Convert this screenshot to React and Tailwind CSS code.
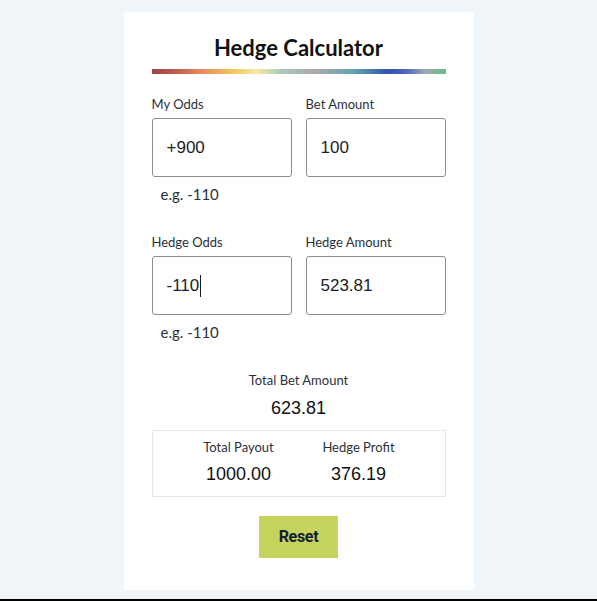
import React from 'react';

const Field = ({ label, value, hint, caret }) => (
  <div className="flex flex-col">
    <label className="text-[13px] leading-[18px] text-[#2b2f3a] font-['Lato',sans-serif]">{label}</label>
    <div className="mt-[5px] h-[59px] border border-[#8c8c8c] rounded-[3px] flex items-center pl-[14px] bg-white">
      <span className="text-[17px] text-[#1c1c24] font-['Liberation_Sans',sans-serif]">{value}</span>
      {caret && <span className="w-px h-[22px] bg-[#1c1c24] ml-px" />}
    </div>
    <div className="mt-[7px] h-[20px] pl-[9px] text-[15px] leading-[20px] text-[#2b2f3a] font-['Lato',sans-serif]">
      {hint}
    </div>
  </div>
);

export default function App() {
  return (
    <div className="min-h-[601px] bg-[#f0f5f9] pt-[12px] border-b-2 border-black">
      <div className="mx-auto w-[350px] h-[578px] bg-white px-[28px] pt-[22px] flex flex-col">
        <h1 className="text-center text-[22px] leading-[28px] font-bold text-[#111] font-['Lato',sans-serif]">
          Hedge Calculator
        </h1>
        <div className="mt-[7px] h-[5px] bg-[linear-gradient(90deg,#9e4448_0%,#c25a4f_8%,#e8845a_16%,#f2c85e_28%,#f6e9a6_36%,#a9c9ba_44%,#a9a9a9_56%,#62a7b0_68%,#3156ae_80%,#4a62bd_86%,#a3a9b6_93%,#5fbf80_100%)]" />

        <div className="mt-[21px] grid grid-cols-2 gap-x-[14px]">
          <Field label="My Odds" value="+900" hint="e.g. -110" />
          <Field label="Bet Amount" value="100" />
        </div>

        <div className="mt-[29px] grid grid-cols-2 gap-x-[14px]">
          <Field label="Hedge Odds" value="-110" hint="e.g. -110" caret />
          <Field label="Hedge Amount" value="523.81" />
        </div>

        <div className="mt-[29px] flex flex-col items-center">
          <span className="text-[13px] leading-[18px] text-[#2b2f3a] font-['Lato',sans-serif]">Total Bet Amount</span>
          <span className="mt-[7px] text-[18px] leading-[24px] text-[#111] font-['Liberation_Sans',sans-serif]">623.81</span>
        </div>

        <div className="mt-[10px] h-[67px] border border-[#e6e6e6] flex justify-center pt-[7px]">
          <div className="w-[120px] flex flex-col items-center">
            <span className="text-[13px] leading-[18px] text-[#2b2f3a] font-['Lato',sans-serif]">Total Payout</span>
            <span className="mt-[6px] text-[18px] leading-[24px] text-[#111] font-['Liberation_Sans',sans-serif]">1000.00</span>
          </div>
          <div className="w-[120px] flex flex-col items-center">
            <span className="text-[13px] leading-[18px] text-[#2b2f3a] font-['Lato',sans-serif]">Hedge Profit</span>
            <span className="mt-[6px] text-[18px] leading-[24px] text-[#111] font-['Liberation_Sans',sans-serif]">376.19</span>
          </div>
        </div>

        <div className="mt-[19px] flex justify-center">
          <button className="w-[79px] h-[42px] bg-[#c6d35c] text-[#142033] text-[16px] font-bold tracking-[-0.3px] font-['Roboto',sans-serif]">
            Reset
          </button>
        </div>
      </div>
    </div>
  );
}
